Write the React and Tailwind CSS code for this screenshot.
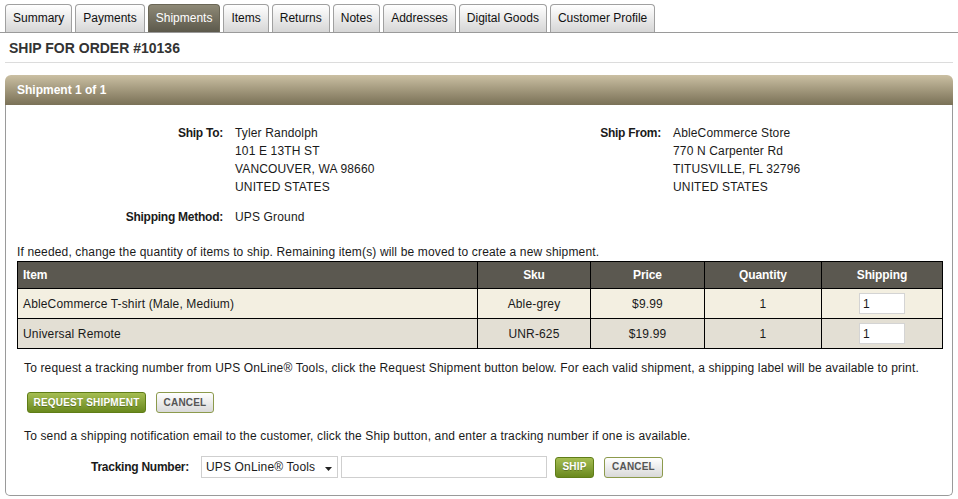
import React from "react";

const tabs = ["Summary","Payments","Shipments","Items","Returns","Notes","Addresses","Digital Goods","Customer Profile"];

function GreenBtn({ children, w }) {
  return (
    <button className={`h-[21px] ${w} rounded-[3px] border border-[#5f7d17] bg-gradient-to-b from-[#a5bd52] to-[#6a891d] text-[10px] font-bold text-white [text-shadow:0_1px_0_rgba(0,0,0,0.25)] tracking-[0.2px]`}>
      {children}
    </button>
  );
}
function GreyBtn({ children, w }) {
  return (
    <button className={`h-[21px] ${w} rounded-[3px] border border-[#8c9a4c] bg-gradient-to-b from-[#ffffff] to-[#d9d9d9] text-[10px] font-bold text-[#555] tracking-[0.2px]`}>
      {children}
    </button>
  );
}

export default function App() {
  const rows = [
    { item: "AbleCommerce T-shirt (Male, Medium)", sku: "Able-grey", price: "$9.99", qty: "1", bg: "bg-[#f3efe1]" },
    { item: "Universal Remote", sku: "UNR-625", price: "$19.99", qty: "1", bg: "bg-[#e3dfd4]" },
  ];
  const lbl = "text-right font-bold tracking-[-0.25px]";
  return (
    <div className="w-[958px] h-[499px] bg-white text-[12px] text-[#1a1a1a] font-['Liberation_Sans',Arial,sans-serif] leading-[18px]">
      {/* Tabs */}
      <div className="flex items-end gap-[3px] pl-[5px] pt-[4px] border-b border-[#9a9a9a]">
        {tabs.map((t) => {
          const active = t === "Shipments";
          return (
            <div
              key={t}
              className={
                "h-[28px] px-[7px] pb-[1px] flex items-center rounded-t-[4px] border border-b-0 text-[12px] " +
                (active
                  ? "border-[#6a6656] bg-gradient-to-b from-[#8e8976] to-[#5c594c] text-white"
                  : "border-[#a0a0a0] bg-gradient-to-b from-[#ffffff] to-[#d6d6d6] text-[#111]")
              }
            >
              {t}
            </div>
          );
        })}
      </div>

      {/* Title */}
      <div className="mx-[5px] h-[30px] flex items-center pl-[4px] border-b border-[#dcdcdc] text-[14px] font-bold text-[#333]">
        SHIP FOR ORDER #10136
      </div>

      {/* Panel */}
      <div className="mx-[5px] mt-[12px] h-[421px] flex flex-col">
        <div className="h-[30px] flex items-center pl-[12px] rounded-t-[6px] bg-gradient-to-b from-[#cbc0a3] to-[#7a7157] text-white font-bold text-[12px]">
          Shipment 1 of 1
        </div>
        <div className="flex-1 border border-t-0 border-[#9a9a9a] rounded-b-[5px] pt-[19px] tracking-[0.15px]">
          {/* Addresses */}
          <div className="flex">
            <div className={`w-[217px] ${lbl}`}>Ship To:</div>
            <div className="w-[262px] pl-[12px]">
              <div>Tyler Randolph</div>
              <div>101 E 13TH ST</div>
              <div>VANCOUVER, WA 98660</div>
              <div>UNITED STATES</div>
            </div>
            <div className={`w-[176px] ${lbl}`}>Ship From:</div>
            <div className="pl-[12px]">
              <div>AbleCommerce Store</div>
              <div>770 N Carpenter Rd</div>
              <div>TITUSVILLE, FL 32796</div>
              <div>UNITED STATES</div>
            </div>
          </div>
          <div className="flex mt-[12px]">
            <div className={`w-[217px] ${lbl}`}>Shipping Method:</div>
            <div className="pl-[12px]">UPS Ground</div>
          </div>

          <div className="mt-[17px] pl-[11px]">
            If needed, change the quantity of items to ship. Remaining item(s) will be moved to create a new shipment.
          </div>

          <table className="ml-[11px] w-[925px] table-fixed border-collapse border border-black">
            <colgroup>
              <col className="w-[460px]" />
              <col className="w-[113px]" />
              <col className="w-[114px]" />
              <col className="w-[117px]" />
              <col className="w-[121px]" />
            </colgroup>
            <thead>
              <tr className="bg-[#5b5850] text-white font-bold tracking-[-0.1px]">
                <th className="h-[27px] border border-black text-left pl-[5px] font-bold">Item</th>
                <th className="h-[27px] border border-black text-center font-bold">Sku</th>
                <th className="h-[27px] border border-black text-center font-bold">Price</th>
                <th className="h-[27px] border border-black text-center font-bold">Quantity</th>
                <th className="h-[27px] border border-black text-center font-bold">Shipping</th>
              </tr>
            </thead>
            <tbody>
              {rows.map((r) => (
                <tr key={r.sku} className={`h-[30px] ${r.bg}`}>
                  <td className="border border-black pl-[5px]">{r.item}</td>
                  <td className="border border-black text-center">{r.sku}</td>
                  <td className="border border-black text-center">{r.price}</td>
                  <td className="border border-black text-center">{r.qty}</td>
                  <td className="border border-black text-center">
                    <input
                      defaultValue="1"
                      className="w-[46px] h-[21px] bg-white border border-[#d4d4d4] px-[3px] text-[12px] align-middle outline-none"
                    />
                  </td>
                </tr>
              ))}
            </tbody>
          </table>

          <div className="mt-[10px] pl-[18px]">
            To request a tracking number from UPS OnLine® Tools, click the Request Shipment button below. For each valid shipment, a shipping label will be available to print.
          </div>
          <div className="mt-[15px] pl-[21px] flex gap-[10px]">
            <GreenBtn w="w-[119px]">REQUEST SHIPMENT</GreenBtn>
            <GreyBtn w="w-[58px]">CANCEL</GreyBtn>
          </div>
          <div className="mt-[14px] pl-[18px]">
            To send a shipping notification email to the customer, click the Ship button, and enter a tracking number if one is available.
          </div>
          <div className="mt-[11px] flex items-center">
            <div className={`w-[183px] ${lbl}`}>Tracking Number:</div>
            <div className="ml-[12px] w-[137px] h-[22px] border border-[#cfcfcf] bg-white flex items-center justify-between pl-[4px] pr-[5px]">
              <span>UPS OnLine® Tools</span>
              <svg width="7" height="4" viewBox="0 0 7 4" className="mt-[3px]"><path d="M0 0H7L3.5 4Z" fill="#222" /></svg>
            </div>
            <input className="ml-[3px] w-[206px] h-[22px] border border-[#cfcfcf] bg-white outline-none" />
            <div className="ml-[8px] flex gap-[10px]">
              <GreenBtn w="w-[39px]">SHIP</GreenBtn>
              <GreyBtn w="w-[59px]">CANCEL</GreyBtn>
            </div>
          </div>
        </div>
      </div>
    </div>
  );
}
